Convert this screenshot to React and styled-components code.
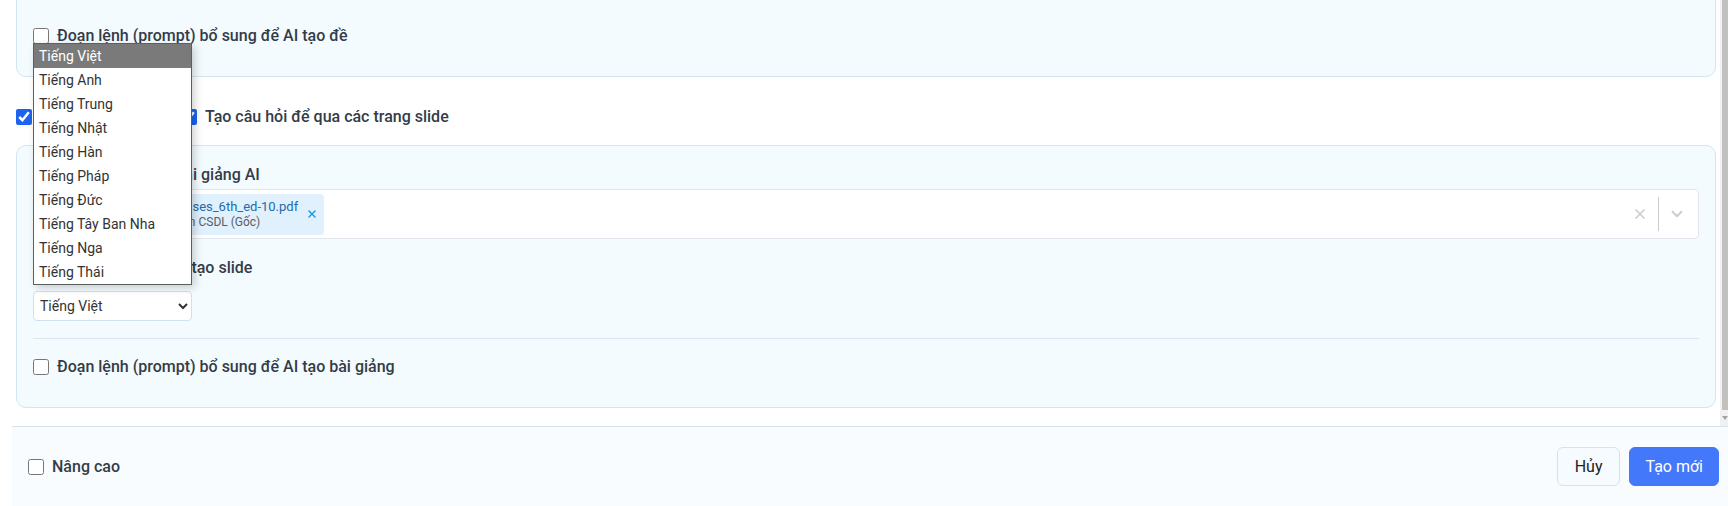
import { useEffect, useRef } from "react";
import styled, { createGlobalStyle } from "styled-components";
import { X, ChevronDown } from "lucide-react";

const GlobalStyle = createGlobalStyle`
  * { box-sizing: border-box; }
  body {
    margin: 0;
    background: #ffffff;
    font-family: Roboto, "Noto Sans", "Liberation Sans", sans-serif;
    color: #333c48;
  }
`;

const languages = [
  "Tiếng Việt",
  "Tiếng Anh",
  "Tiếng Trung",
  "Tiếng Nhật",
  "Tiếng Hàn",
  "Tiếng Pháp",
  "Tiếng Đức",
  "Tiếng Tây Ban Nha",
  "Tiếng Nga",
  "Tiếng Thái",
];

// page frame
const Page = styled.div`
  display: flex;
  flex-direction: column;
  height: 506px;
  padding-left: 12px;
`;

const ScrollArea = styled.div`
  display: flex;
  height: 426px;
`;

const Viewport = styled.div`
  flex: 1;
  overflow-y: scroll;
  scrollbar-width: none;
  padding: 0 4px 18px 4px;

  &::-webkit-scrollbar {
    display: none;
  }
`;

// drawn scroll rail beside the viewport
const Rail = styled.div`
  width: 8px;
  display: flex;
  flex-direction: column;
  background: #f1f1f1;
`;

const Thumb = styled.div`
  flex: 1;
  margin-left: 2px;
  background: #c1c1c1;
`;

const RailArrow = styled.div`
  height: 16px;
  display: flex;
  align-items: center;
  justify-content: center;
  padding-left: 2px;

  &::after {
    content: "";
    border-left: 3px solid transparent;
    border-right: 3px solid transparent;
    border-top: 4px solid #a3a3a3;
  }
`;

const Card = styled.div`
  border: 1px solid #d3e5f3;
  border-radius: 10px;
  background: #f3fbff;
  padding: 19px 16px 30px;
`;

const Label = styled.div`
  font-size: 16px;
  line-height: 20px;
  font-weight: 500;
  color: #333c48;
  margin-top: ${(p) => p.$top || 0}px;
`;

const OptionRow = styled.label`
  display: flex;
  align-items: center;
  gap: 8px;
  font-size: 16px;
  line-height: 20px;
  font-weight: 500;
  color: #333c48;
  margin-top: ${(p) => p.$top || 0}px;
`;

const OptionGroup = styled.div`
  display: flex;
  align-items: center;
  gap: 26px;
  margin: 30px 0 18px;
`;

const Check = styled.input.attrs({ type: "checkbox" })`
  width: 16px;
  height: 16px;
  margin: 0;
  accent-color: #1d63ed;
  flex-shrink: 0;
`;

const SelectWrap = styled.div`
  position: relative;
  width: 159px;
  margin-top: ${(p) => p.$top || 0}px;
`;

const NativeSelect = styled.select`
  width: 159px;
  height: 30px;
  border: 1px solid #cfe1f0;
  border-radius: 4px;
  background: #ffffff;
  font-family: Roboto, "Liberation Sans", sans-serif;
  font-size: 14px;
  color: #333;
  padding: 0 2px;
`;

// open popup of the language select
const Popup = styled.ul`
  position: absolute;
  left: 0;
  bottom: calc(100% + 6px);
  width: 159px;
  margin: 0;
  padding: 0;
  list-style: none;
  background: #ffffff;
  border: 1px solid #5e5e5e;
  box-shadow: 3px 3px 8px rgba(0, 0, 0, 0.18);
  z-index: 5;
`;

const PopupItem = styled.li`
  height: 24px;
  line-height: 24px;
  padding-left: 5px;
  font-size: 14px;
  color: ${(p) => (p.$active ? "#ffffff" : "#333")};
  background: ${(p) => (p.$active ? "#7a7a7a" : "transparent")};
`;

const Divider = styled.div`
  height: 1px;
  background: #dbe7f0;
  margin-top: 17px;
`;

// file picker
const MultiSelect = styled.div`
  display: flex;
  align-items: center;
  height: 50px;
  margin-top: 4px;
  padding: 3px;
  background: #ffffff;
  border: 1px solid #e0e6ec;
  border-radius: 4px;
`;

const Values = styled.div`
  flex: 1;
  display: flex;
  align-items: center;
`;

const Chip = styled.div`
  display: flex;
  align-items: center;
  gap: 8px;
  height: 41px;
  padding: 0 6px 0 8px;
  background: #e0f0fc;
  border-radius: 4px;
`;

const ChipText = styled.div`
  display: flex;
  flex-direction: column;
`;

const ChipName = styled.span`
  font-size: 13px;
  line-height: 17px;
  color: #1c6dab;
`;

const ChipSub = styled.span`
  font-size: 12px;
  line-height: 15px;
  color: #5a5f66;
`;

const ChipRemove = styled.span`
  display: flex;
  color: #1a9be6;
`;

const Indicator = styled.div`
  width: 36px;
  height: 100%;
  display: flex;
  align-items: center;
  justify-content: center;
  color: #cccccc;
`;

const Separator = styled.span`
  width: 1px;
  height: 34px;
  background: #cccccc;
`;

// footer bar
const Footer = styled.div`
  height: 80px;
  display: flex;
  align-items: center;
  justify-content: space-between;
  padding: 0 9px 0 16px;
  border-top: 1px solid #d4e5f1;
  background: #f8fcfe;
`;

const Actions = styled.div`
  display: flex;
  gap: 9px;
`;

const Button = styled.button`
  height: 39px;
  padding: 0 ${(p) => (p.$primary ? 15 : 17)}px;
  border-radius: 6px;
  font-family: Roboto, "Liberation Sans", sans-serif;
  font-size: 16px;
  border: 1px solid ${(p) => (p.$primary ? "#4478fb" : "#d0e5f3")};
  background: ${(p) => (p.$primary ? "#4478fb" : "#f5fbfe")};
  color: ${(p) => (p.$primary ? "#ffffff" : "#222")};
`;

export default function App() {
  const scrollRef = useRef(null);

  useEffect(() => {
    const el = scrollRef.current;
    if (el) el.scrollTop = el.scrollHeight;
  }, []);

  return (
    <>
      <GlobalStyle />
      <Page>
        <ScrollArea>
          <Viewport ref={scrollRef}>
            <Card>
              <Label>Ngôn ngữ sử dụng để tạo đề</Label>
              <SelectWrap $top={13}>
                <NativeSelect defaultValue="Tiếng Việt">
                  {languages.map((l) => (
                    <option key={l}>{l}</option>
                  ))}
                </NativeSelect>
              </SelectWrap>
              <OptionRow $top={40}>
                <Check />
                Đoạn lệnh (prompt) bổ sung để AI tạo đề
              </OptionRow>
            </Card>

            <OptionGroup>
              <OptionRow>
                <Check defaultChecked />
                Tạo bài giảng AI
              </OptionRow>
              <OptionRow>
                <Check defaultChecked />
                Tạo câu hỏi để qua các trang slide
              </OptionRow>
            </OptionGroup>

            <Card>
              <Label>Chọn tài liệu để tạo bài giảng AI</Label>
              <MultiSelect>
                <Values>
                  <Chip>
                    <ChipText>
                      <ChipName>Fundamentals_of_Databases_6th_ed-10.pdf</ChipName>
                      <ChipSub>Thư mục: Tài liệu giảng môn CSDL (Gốc)</ChipSub>
                    </ChipText>
                    <ChipRemove>
                      <X size={12} strokeWidth={3} />
                    </ChipRemove>
                  </Chip>
                </Values>
                <Indicator>
                  <X size={16} strokeWidth={2.5} />
                </Indicator>
                <Separator />
                <Indicator>
                  <ChevronDown size={18} strokeWidth={2.5} />
                </Indicator>
              </MultiSelect>

              <Label $top={19}>Ngôn ngữ sử dụng để tạo slide</Label>
              <SelectWrap $top={13}>
                <NativeSelect defaultValue="Tiếng Việt">
                  {languages.map((l) => (
                    <option key={l}>{l}</option>
                  ))}
                </NativeSelect>
                <Popup>
                  {languages.map((l, i) => (
                    <PopupItem key={l} $active={i === 0}>
                      {l}
                    </PopupItem>
                  ))}
                </Popup>
              </SelectWrap>

              <Divider />
              <OptionRow $top={18}>
                <Check />
                Đoạn lệnh (prompt) bổ sung để AI tạo bài giảng
              </OptionRow>
            </Card>
          </Viewport>
          <Rail>
            <Thumb />
            <RailArrow />
          </Rail>
        </ScrollArea>

        <Footer>
          <OptionRow>
            <Check />
            Nâng cao
          </OptionRow>
          <Actions>
            <Button>Hủy</Button>
            <Button $primary>Tạo mới</Button>
          </Actions>
        </Footer>
      </Page>
    </>
  );
}
